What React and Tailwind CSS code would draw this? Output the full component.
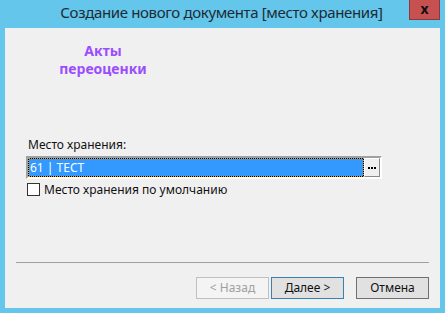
export default function App() {
  return (
    <div
      className="w-[445px] h-[313px] bg-[#63C6EA] flex flex-col"
      style={{ fontFamily: '"Noto Sans", "Open Sans", sans-serif' }}
    >
      {/* Title bar */}
      <div className="relative h-[28px] shrink-0 flex items-center justify-center">
        <span className="text-[15px] leading-[20px] tracking-[-0.35px] text-[#1E2B35] -mt-[5px] ml-[-2px]">
          Создание нового документа [место хранения]
        </span>
        <div className="absolute top-0 left-[409px] w-[31px] h-[20px] bg-[#C75050] border border-t-0 border-[#8A3A3A] flex items-center justify-center">
          <span className="text-[14px] leading-none font-bold text-[#111] -mt-[2px]">x</span>
        </div>
      </div>

      {/* Body */}
      <div className="flex-1 mx-[5px] mb-[5px] bg-[#F0F0F0] flex flex-col">
        <div className="w-[196px] pt-[14px] text-center text-[14px] leading-[18px] font-bold text-[#9B4DFF]">
          <div>Акты</div>
          <div>переоценки</div>
        </div>

        <div className="mt-[59px] ml-[23px] text-[12px] leading-[15px] text-[#111]">
          Место хранения:
        </div>

        {/* Combo field */}
        <div className="mt-[4px] ml-[21px] w-[356px] h-[23px] border-2 border-t-[#A0A0A0] border-l-[#A0A0A0] border-b-white border-r-white">
          <div className="h-full flex">
            <div className="flex-1 bg-black border border-dotted border-[#F09A20]">
              <div className="h-full bg-[#3399FF] flex items-center pl-[1px] text-[12px] leading-none text-white">
                61 | ТЕСТ
              </div>
            </div>
            <div className="w-[16px] bg-[#F0F0F0] border border-t-white border-l-white border-b-[#8A8A8A] border-r-[#8A8A8A] flex items-center justify-center gap-[1px] pt-[1px]">
              <span className="w-[2px] h-[2px] bg-black" />
              <span className="w-[2px] h-[2px] bg-black" />
              <span className="w-[2px] h-[2px] bg-black" />
            </div>
          </div>
        </div>

        {/* Checkbox */}
        <label className="mt-[3px] ml-[22px] flex items-center gap-[4px] text-[12px] leading-[15px] text-[#111]">
          <span className="w-[13px] h-[13px] bg-white border border-[#333]" />
          Место хранения по умолчанию
        </label>

        <div className="flex-1" />

        <div className="mx-[11px] h-px bg-[#A0A0A0]" />

        {/* Buttons */}
        <div className="mt-[14px] mb-[9px] mr-[11px] flex justify-end">
          <button className="w-[73px] h-[22px] bg-[#F4F4F4] border border-[#BFBFBF] text-[12px] text-[#A0A0A0]">
            &lt; Назад
          </button>
          <button className="ml-[2px] w-[73px] h-[22px] bg-[#E1E1E1] border border-[#3C7FB1] text-[12px] text-[#111]">
            Далее &gt;
          </button>
          <button className="ml-[12px] w-[73px] h-[22px] bg-[#E1E1E1] border border-[#707070] text-[12px] text-[#111]">
            Отмена
          </button>
        </div>
      </div>
    </div>
  );
}
